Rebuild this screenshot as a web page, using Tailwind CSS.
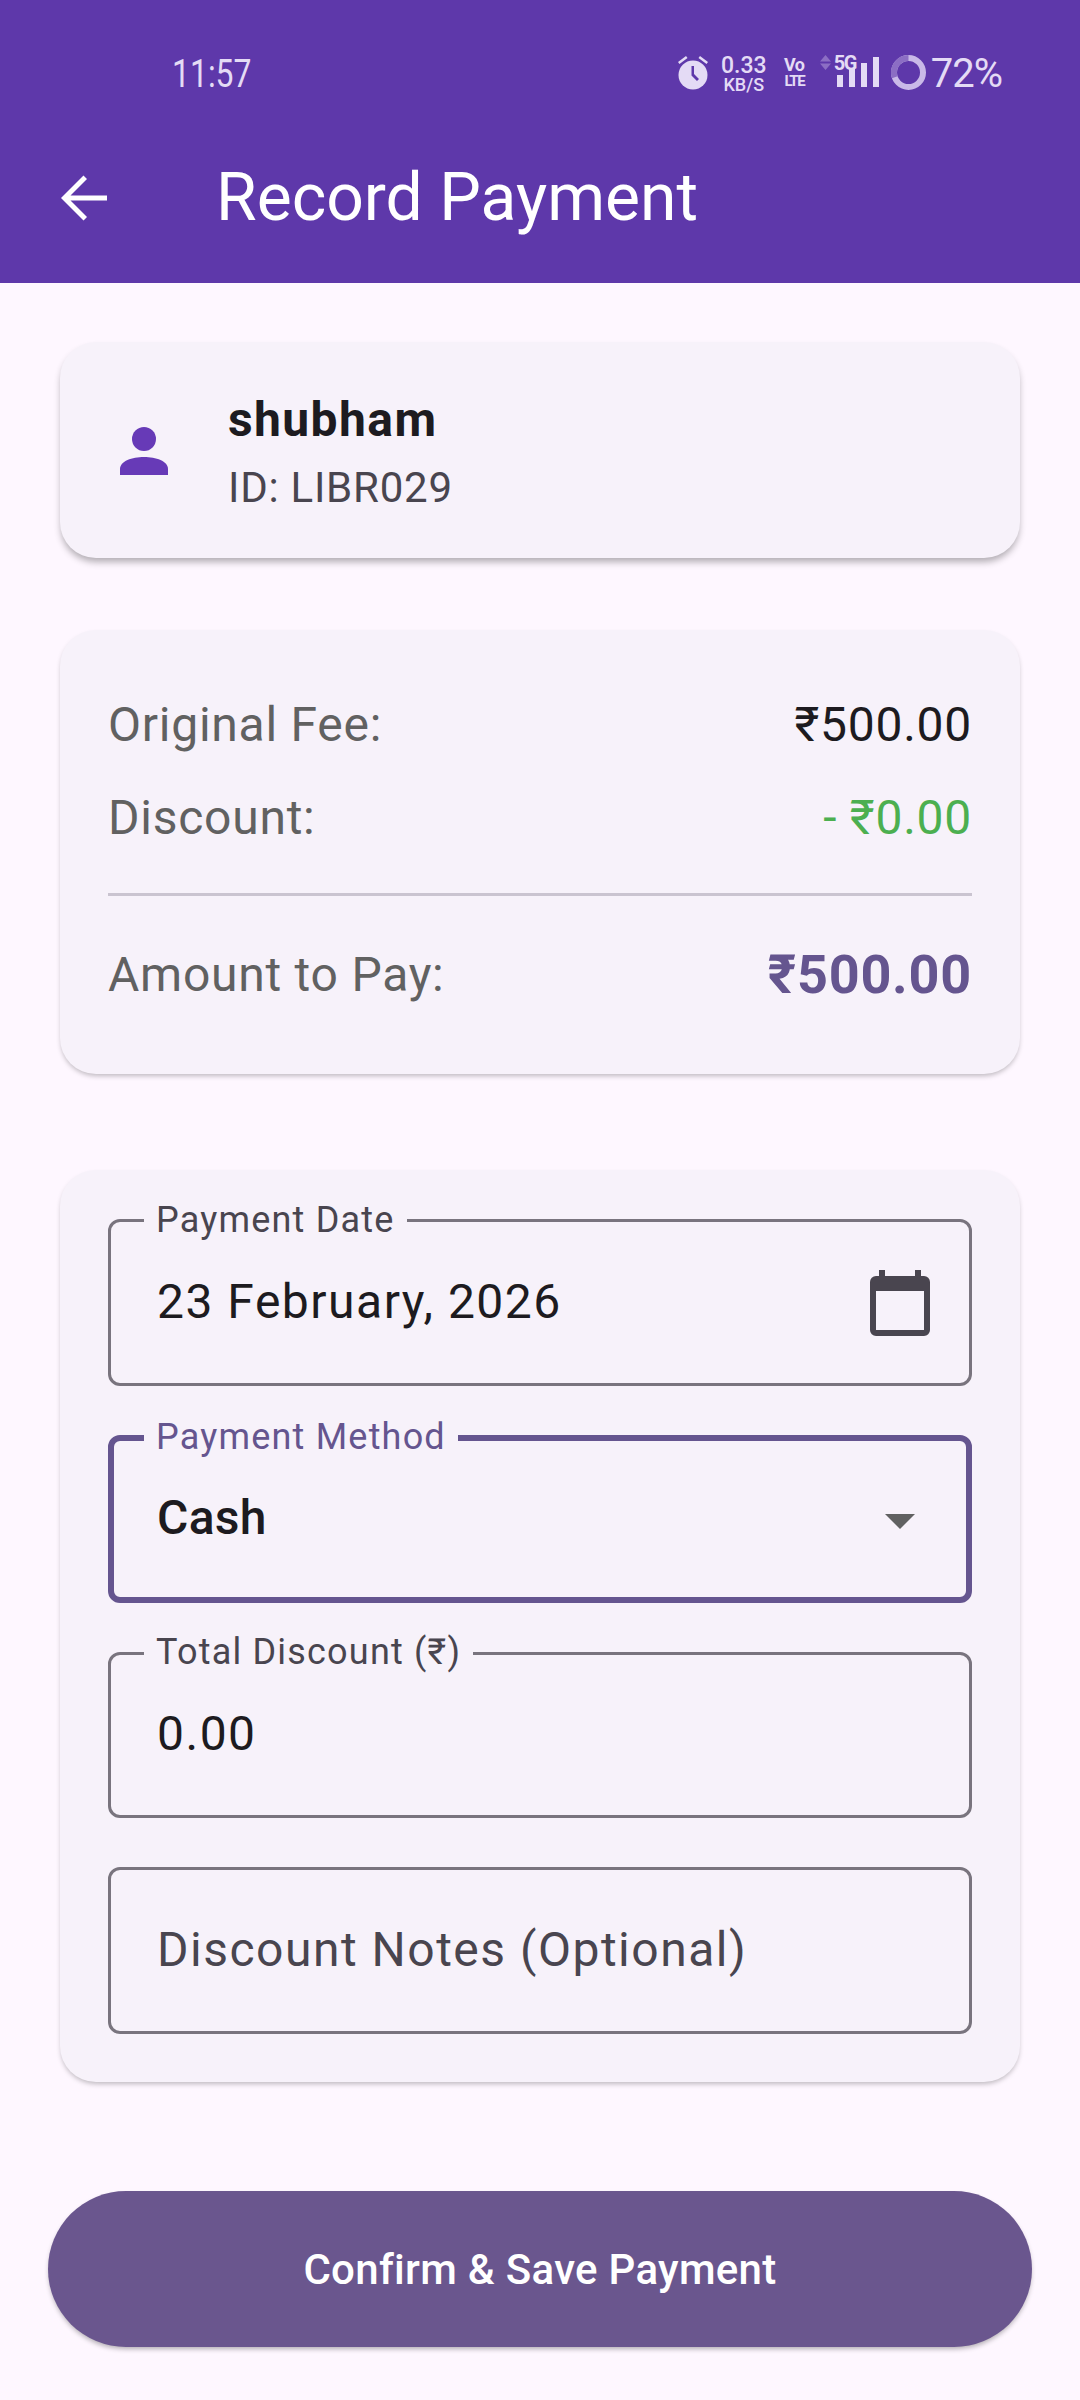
<!DOCTYPE html>
<html lang="en">
<head>
    <meta charset="UTF-8">
    <meta name="viewport" content="width=device-width, initial-scale=1.0">
    <title>Record Payment</title>
    <script src="https://cdn.jsdelivr.net/npm/@tailwindcss/browser@4"></script>
</head>
<body class="bg-[#fef7ff] font-['Roboto',sans-serif] w-[1080px] h-[2400px] overflow-hidden">
    <!-- App bar -->
    <header class="bg-[#5e38aa] h-[283px] flex flex-col text-white">
        <div class="h-[123px] pl-[172px] pr-[78px] pt-[51px] flex justify-between items-start text-[#e4dbf5]">
            <span class="mt-[1px] inline-block origin-left scale-x-[0.84] text-[38px] leading-[44px]">11:57</span>
            <div class="flex items-start h-[48px]">
                <svg class="w-[32px] h-[35px] mt-[4px]" viewBox="0 0 32 35" fill="#e4dbf5">
                    <circle cx="16" cy="20" r="14.500"/>
                    <path d="M1 7l8-6 1.500 2-8 6zM31 7l-8-6-1.500 2 8 6z"/>
                    <path d="M14.500 11h2.500v8l5 5-2 2-5.500-5.500z" fill="#5e38aa"/>
                </svg>
                <div class="ml-[11px] w-[48px] mt-[4px] flex flex-col items-center font-medium">
                    <span class="text-[23px] leading-[21px]">0.33</span>
                    <span class="text-[18px] leading-[17px]">KB/S</span>
                </div>
                <div class="ml-[16px] w-[21px] mt-[5px] flex flex-col items-center font-bold">
                    <span class="text-[18px] leading-[17px] tracking-[-0.5px]">Vo</span>
                    <span class="text-[15px] leading-[16px] tracking-[-1.500px]">LTE</span>
                </div>
                <svg class="ml-[15px] w-[11px] h-[15px] mt-[4px]" viewBox="0 0 11 15" fill="#8c6ec4">
                    <path d="M5.500 0L11 6.500H0zM5.500 15L0 8.500h11z"/>
                </svg>
                <div class="relative w-[45px] h-[32px] ml-[3px] mt-[4px]">
                    <span class="absolute left-0 top-[-2px] text-[20px] leading-[20px] font-bold tracking-[-1.500px]">5G</span>
                    <div class="absolute left-[3px] bottom-0 flex items-end gap-[6px]">
                        <div class="w-[6px] h-[12px] bg-[#e4dbf5]"></div>
                        <div class="w-[6px] h-[18px] bg-[#e4dbf5]"></div>
                        <div class="w-[6px] h-[24px] bg-[#e4dbf5]"></div>
                        <div class="w-[6px] h-[30px] bg-[#e4dbf5]"></div>
                    </div>
                </div>
                <svg class="ml-[12px] w-[35px] h-[35px] mt-[4px]" viewBox="0 0 35 35" fill="none" stroke-width="6">
                    <circle cx="17.500" cy="17.500" r="14.500" stroke="#c9b9e8"/>
                    <path d="M3.800 22.300A14.500 14.500 0 0 1 17.500 3" stroke="#8c6ec4"/>
                </svg>
                <span class="ml-[5px] mt-[1px] text-[40px] leading-[44px] tracking-[-1px]">72%</span>
            </div>
        </div>
        <div class="flex items-center h-[160px] pb-[10px]">
            <svg class="ml-[59px] w-[48px] h-[48px]" viewBox="0 0 48 48" fill="white">
                <path d="M48 21.500H11.500L28 5l-3.500-3.500L2 24l22.500 22.500L28 43 11.500 26.500H48z"/>
            </svg>
            <h1 class="ml-[109px] text-[66px] leading-[88px]">Record Payment</h1>
        </div>
    </header>

    <main class="px-[60px] pt-[59px] flex flex-col">
        <!-- Member card -->
        <section class="h-[216px] rounded-[36px] bg-[#f7f2fa] shadow-[0_5px_7px_-1px_rgba(0,0,0,0.3)] flex items-center pl-[60px]">
            <svg class="w-[48px] h-[48px] mt-[1px]" viewBox="0 0 48 48" fill="#673ab7">
                <circle cx="24" cy="12" r="12"/>
                <path d="M0 48v-6c0-8 12-12 24-12s24 4 24 12v6z"/>
            </svg>
            <div class="ml-[60px] pt-[6px]">
                <p class="text-[48px] leading-[60px] font-bold tracking-[1.400px] text-[#1d1b20]">shubham</p>
                <p class="mt-[10px] text-[42px] leading-[56px] tracking-[0.75px] text-[#49454f]">ID: LIBR029</p>
            </div>
        </section>

        <!-- Amount summary -->
        <section class="mt-[72px] h-[444px] rounded-[36px] bg-[#f7f2fa] shadow-[0_3px_5px_-1px_rgba(0,0,0,0.25)] px-[48px] pt-[67px] text-[48px] leading-[56px] tracking-[0.75px]">
            <div class="flex justify-between">
                <span class="text-[#616161]">Original Fee:</span>
                <span class="text-[#1d1b20]">₹500.00</span>
            </div>
            <div class="mt-[37px] flex justify-between">
                <span class="text-[#616161]">Discount:</span>
                <span class="text-[#4caf50]">- ₹0.00</span>
            </div>
            <div class="mt-[47px] h-[3px] bg-[#cac4d0]"></div>
            <div class="mt-[51px] flex justify-between items-center">
                <span class="text-[#616161]">Amount to Pay:</span>
                <span class="text-[54px] font-bold text-[#65558f] tracking-[0.75px]">₹500.00</span>
            </div>
        </section>

        <!-- Form card -->
        <section class="mt-[96px] h-[912px] rounded-[36px] bg-[#f7f2fa] shadow-[0_3px_5px_-1px_rgba(0,0,0,0.25)] px-[48px] pt-[49px] flex flex-col gap-[49px]">
            <div class="relative h-[167px] rounded-[12px] border-[3px] border-[#79747e] pl-[46px] pr-[39px] flex items-center justify-between">
                <span class="absolute left-[33px] top-[-24px] bg-[#f7f2fa] px-[12px] text-[36px] leading-[44px] tracking-[1.2px] text-[#49454f]">Payment Date</span>
                <span class="text-[48px] tracking-[1.5px] text-[#1d1b20] mb-[2px]">23 February, 2026</span>
                <svg class="w-[60px] h-[66px] mt-[1px]" viewBox="0 0 60 66" fill="#49454f">
                    <path fill-rule="evenodd" d="M9 0h6v6h30V0h6v6h3a6 6 0 0 1 6 6v48a6 6 0 0 1-6 6H6a6 6 0 0 1-6-6V12a6 6 0 0 1 6-6h3zM6 21v39h48V21z"/>
                </svg>
            </div>
            <div class="relative h-[168px] rounded-[12px] border-[6px] border-[#65558f] pl-[43px] pr-[51px] flex items-center justify-between">
                <span class="absolute left-[30px] top-[-26px] bg-[#f7f2fa] px-[12px] text-[36px] leading-[44px] tracking-[1.2px] text-[#65558f]">Payment Method</span>
                <span class="text-[48px] font-medium tracking-[0.3px] text-[#1d1b20] mb-[2px]">Cash</span>
                <svg class="w-[30px] h-[15px] mt-[4px]" viewBox="0 0 30 15" fill="#616161"><path d="M0 0h30L15 15z"/></svg>
            </div>
            <div class="relative h-[166px] rounded-[12px] border-[3px] border-[#79747e] pl-[46px] flex items-center">
                <span class="absolute left-[33px] top-[-25px] bg-[#f7f2fa] px-[12px] text-[36px] leading-[44px] tracking-[1.2px] text-[#49454f]">Total Discount (₹)</span>
                <span class="text-[48px] tracking-[1.5px] text-[#1d1b20] mb-[2px]">0.00</span>
            </div>
            <div class="h-[167px] rounded-[12px] border-[3px] border-[#79747e] pl-[46px] flex items-center">
                <span class="text-[48px] tracking-[1.5px] text-[#49454f] mb-[2px]">Discount Notes (Optional)</span>
            </div>
        </section>

        <!-- Confirm button -->
        <button class="mt-[109px] -mx-[12px] h-[156px] rounded-full bg-[#6a568e] shadow-[0_3px_5px_-1px_rgba(0,0,0,0.3)] text-white text-[42px] font-medium tracking-[0.3px]">Confirm &amp; Save Payment</button>
    </main>
</body>
</html>
